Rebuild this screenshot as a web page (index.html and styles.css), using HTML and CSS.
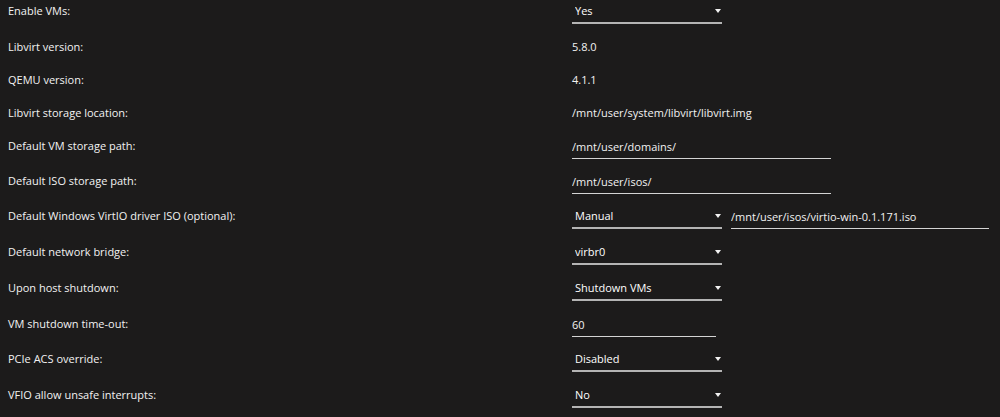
FILE: index.html
```html
<!DOCTYPE html>
<html lang="en">
<head>
  <meta charset="UTF-8" />
  <title>VM Manager Settings</title>
  <link rel="stylesheet" href="styles.css">
</head>
<body>

  <div class="settings">

    <div class="row select-row">
      <div class="label">Enable VMs:</div>
      <span class="select-wrap">
        <select><option>Yes</option><option>No</option></select>
      </span>
    </div>

    <div class="row">
      <div class="label">Libvirt version:</div>
      <div class="value">5.8.0</div>
    </div>

    <div class="row">
      <div class="label">QEMU version:</div>
      <div class="value">4.1.1</div>
    </div>

    <div class="row">
      <div class="label">Libvirt storage location:</div>
      <div class="value">/mnt/user/system/libvirt/libvirt.img</div>
    </div>

    <div class="row input-row">
      <div class="label">Default VM storage path:</div>
      <input type="text" value="/mnt/user/domains/" />
    </div>

    <div class="row input-row">
      <div class="label">Default ISO storage path:</div>
      <input type="text" value="/mnt/user/isos/" />
    </div>

    <div class="row select-row">
      <div class="label">Default Windows VirtIO driver ISO (optional):</div>
      <span class="select-wrap">
        <select><option>Manual</option><option>Download</option></select>
      </span>
      <input type="text" class="iso-path" value="/mnt/user/isos/virtio-win-0.1.171.iso" />
    </div>

    <div class="row select-row">
      <div class="label">Default network bridge:</div>
      <span class="select-wrap">
        <select><option>virbr0</option><option>br0</option></select>
      </span>
    </div>

    <div class="row select-row">
      <div class="label">Upon host shutdown:</div>
      <span class="select-wrap">
        <select><option>Shutdown VMs</option><option>Hibernate VMs</option></select>
      </span>
    </div>

    <div class="row input-row">
      <div class="label">VM shutdown time-out:</div>
      <input type="text" class="short" value="60" />
    </div>

    <div class="row select-row">
      <div class="label">PCIe ACS override:</div>
      <span class="select-wrap">
        <select><option>Disabled</option><option>Downstream</option><option>Multi-function</option></select>
      </span>
    </div>

    <div class="row select-row">
      <div class="label">VFIO allow unsafe interrupts:</div>
      <span class="select-wrap">
        <select><option>No</option><option>Yes</option></select>
      </span>
    </div>

  </div>

</body>
</html>
```

FILE: styles.css
```css
body {
  margin: 0;
  background: #1c1b1b;
  color: #f2f2f2;
  font-family: "Open Sans", sans-serif;
  font-size: 11px;
}

.settings {
  padding-left: 8px;
}

.row {
  display: flex;
  height: 33px;
}

.row.input-row {
  height: 35px;
}

.row.select-row {
  height: 36px;
}

.label {
  width: 564px;
  flex-shrink: 0;
  padding-top: 4px;
  line-height: 14px;
}

.value {
  padding-top: 4px;
  line-height: 14px;
}

select, input {
  font: inherit;
  color: inherit;
  background: transparent;
  border: none;
  border-bottom: 1px solid #d4d4d4;
  margin: 0;
  padding: 4px 0 5px;
  line-height: 14px;
  height: 24px;
  box-sizing: border-box;
  outline: none;
}

input {
  width: 259px;
}

input.short {
  width: 144px;
}

input.iso-path {
  margin-left: 9px;
  width: 258px;
}

.select-wrap {
  position: relative;
  display: inline-block;
  height: 24px;
}

.select-wrap::after {
  content: "";
  position: absolute;
  right: 1px;
  top: 9px;
  border-left: 3px solid transparent;
  border-right: 3px solid transparent;
  border-top: 4px solid #f2f2f2;
  pointer-events: none;
}

select {
  -webkit-appearance: none;
  appearance: none;
  width: 150px;
  padding-left: 3px;
  color: #fff;
  border-bottom: 2px solid #b4b4b4;
}

select option {
  background: #1c1b1b;
  color: #f2f2f2;
}
```
